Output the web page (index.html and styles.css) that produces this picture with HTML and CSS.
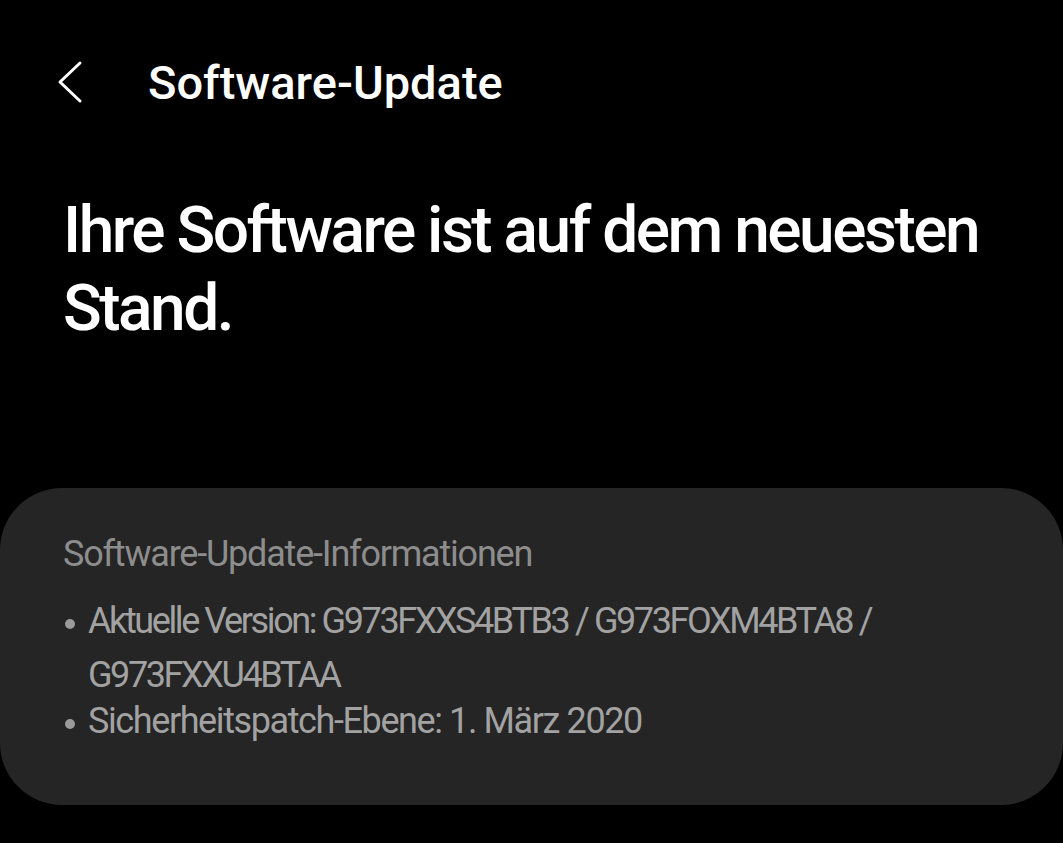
FILE: index.html
```html
<!DOCTYPE html>
<html lang="de">
<head>
  <meta charset="UTF-8">
  <meta name="viewport" content="width=device-width, initial-scale=1.0">
  <title>Software-Update</title>
  <link rel="stylesheet" href="styles.css">
</head>
<body>
  <div id="screen">
    <!-- Header -->
    <header class="top-bar">
      <button class="back-btn" aria-label="Zurück">
        <svg width="28" height="44" viewBox="0 0 28 44">
          <polyline points="24,3 4,22 24,41" fill="none" stroke="#fff" stroke-width="3" stroke-linecap="round" stroke-linejoin="round"/>
        </svg>
      </button>
      <h1 class="title">Software-Update</h1>
    </header>

    <!-- Status -->
    <h2 class="status">Ihre Software ist auf dem neuesten Stand.</h2>

    <!-- Info card -->
    <section class="info-card">
      <h3 class="info-title">Software-Update-Informationen</h3>
      <ul class="info-list">
        <li class="item-version">Aktuelle Version: G973FXXS4BTB3 / G973FOXM4BTA8 / G973FXXU4BTAA</li>
        <li class="item-patch">Sicherheitspatch-Ebene: 1. März 2020</li>
      </ul>
    </section>
  </div>
</body>
</html>
```

FILE: styles.css
```css
body {
  margin: 0;
  padding: 0;
  background-color: #000;
  color: #fff;
  font-family: Roboto, 'Noto Sans', sans-serif;
}

#screen {
  width: 1063px;
  height: 843px;
  overflow: hidden;
}

.top-bar {
  display: flex;
  align-items: center;
  height: 44px;
  padding: 60px 0 0 56px;
}

.back-btn {
  background: none;
  border: none;
  padding: 0;
  width: 92px;
  height: 44px;
  display: flex;
  align-items: center;
  cursor: pointer;
}

.title {
  margin: 0;
  font-size: 47px;
  font-weight: 500;
  letter-spacing: 0;
}

.status {
  margin: 88px 30px 0 63px;
  font-size: 64px;
  font-weight: 500;
  line-height: 78px;
  letter-spacing: -2.5px;
}

.info-card {
  margin-top: 140px;
  height: 317px;
  box-sizing: border-box;
  padding: 45px 63px 0;
  background-color: #252525;
  border-radius: 62px;
}

.info-title {
  margin: 0;
  font-size: 36px;
  font-weight: 400;
  color: #8d8d8d;
  letter-spacing: -1.2px;
}

.info-list {
  list-style: none;
  margin: 19px 0 0;
  padding: 0;
  color: #a2a2a2;
  font-size: 36px;
}

.info-list li {
  position: relative;
  padding-left: 25px;
  line-height: 54px;
}

.info-list li::before {
  content: "";
  position: absolute;
  left: 2px;
  top: 25px;
  width: 10px;
  height: 10px;
  border-radius: 50%;
  background-color: #9a9a9a;
}

.info-list .item-version {
  letter-spacing: -2.4px;
}

.info-list .item-patch {
  margin-top: -8px;
  letter-spacing: -1.4px;
}
```
